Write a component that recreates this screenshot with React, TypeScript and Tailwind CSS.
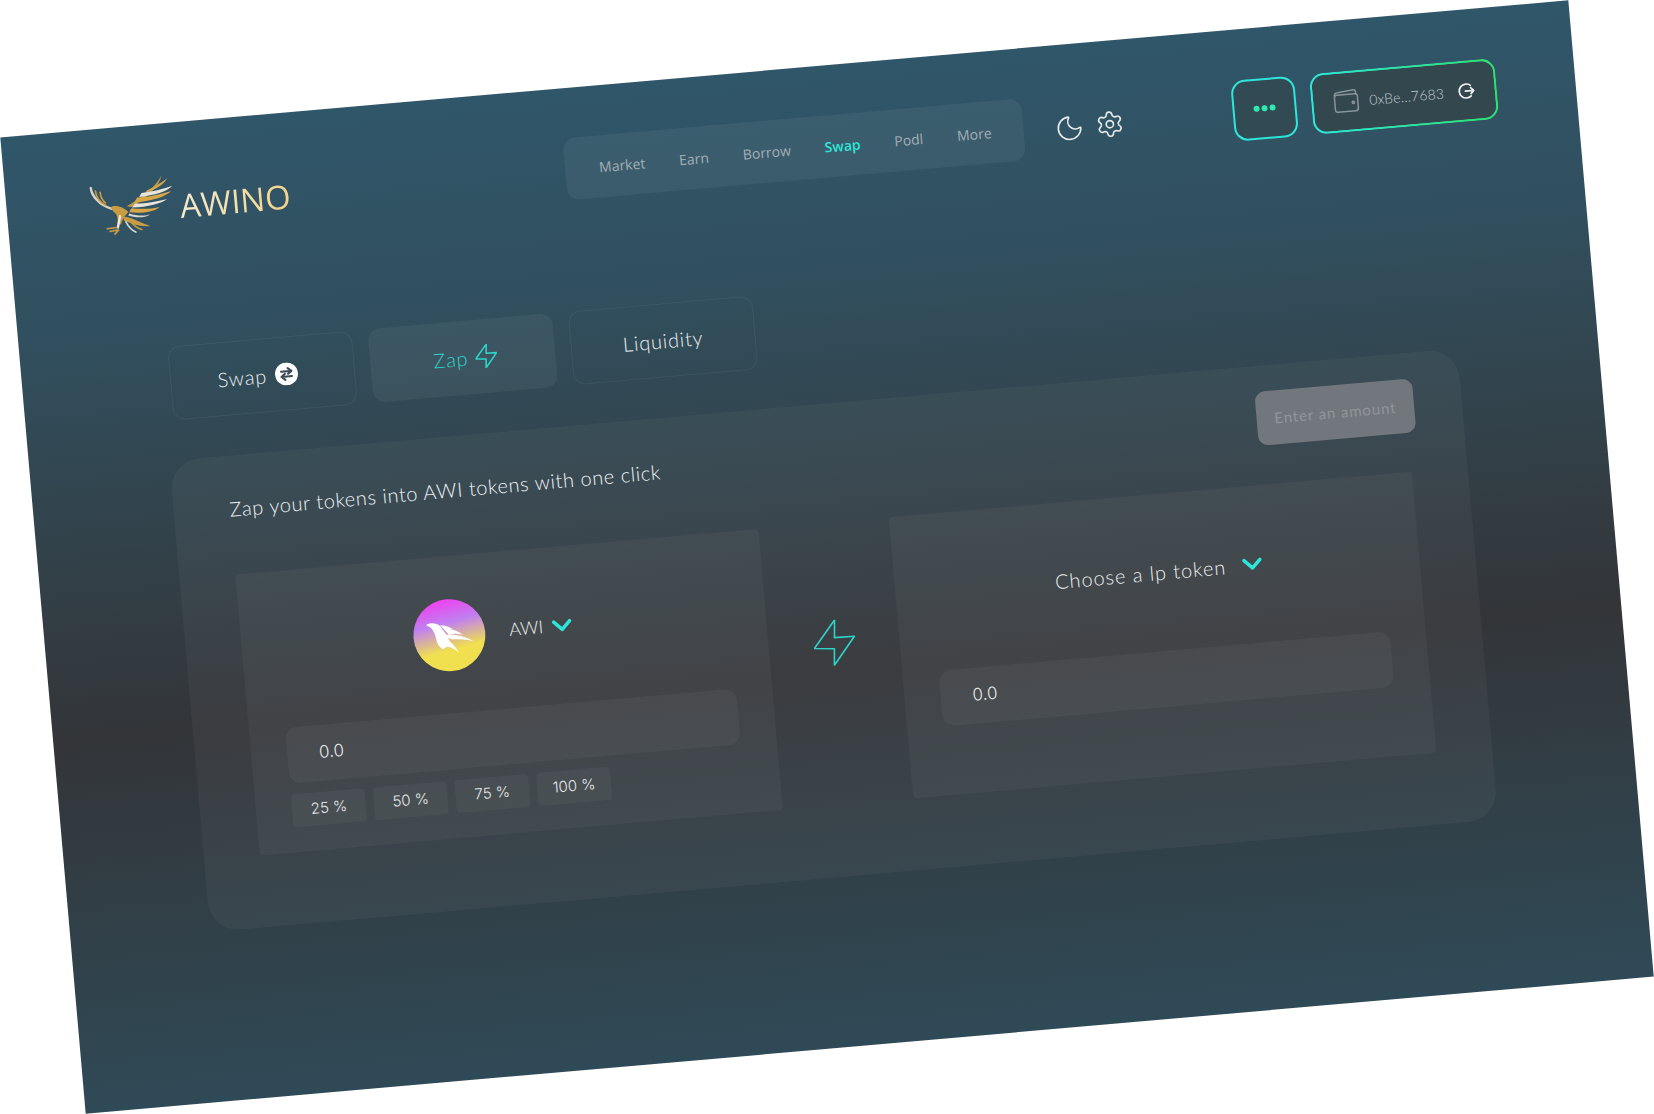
import { ChevronDown, Moon, Settings } from "lucide-react";

const navItems = ["Market", "Earn", "Borrow", "Swap", "Podl", "More"];
const percents = ["25 %", "50 %", "75 %", "100 %"];

function Eagle() {
  return (
    <svg width="90" height="68" viewBox="80 60 270 205" fill="none" strokeLinecap="round" className="-mt-[6px] shrink-0 overflow-visible">
      <g transform="rotate(5 210 160)">
        <path d="M200 168C240 145 285 115 305 75C300 105 265 140 215 170Z" fill="#c99b42" />
        <path d="M262 120C285 110 308 95 322 84C316 100 290 118 255 128Z" fill="#d3a64d" />
        <path d="M245 128C285 122 315 115 338 106C322 124 285 134 238 140Z" fill="#e7e4da" />
        <path d="M232 142C270 140 310 130 334 122C318 140 275 152 222 158Z" fill="#d9a646" />
        <path d="M226 160C260 160 300 152 322 146C305 160 265 170 216 172Z" fill="#e7e4da" />
        <path d="M214 174C245 178 280 175 300 170C285 185 245 190 208 186Z" fill="#d9a646" />
        <path d="M208 190C232 198 258 198 272 192C255 204 228 204 205 196Z" fill="#d8d4c8" />
        <path d="M92 113C95 135 115 165 156 176" stroke="#d8d4c8" strokeWidth="7" />
        <path d="M106 122C108 140 118 155 138 166" stroke="#c99b42" strokeWidth="5" />
        <path d="M120 126C122 140 126 150 136 158" stroke="#c99b42" strokeWidth="5" />
        <path d="M152 172C165 162 190 170 205 185C198 195 188 200 184 222L172 224C176 205 172 192 160 184Z" fill="#c99b42" />
        <path d="M180 198L174 232" stroke="#eeeae0" strokeWidth="7" />
        <path d="M190 200C215 200 245 220 272 228C240 232 210 218 192 212Z" fill="#c99b42" />
        <path d="M198 215C205 228 215 240 228 246" stroke="#d8d4c8" strokeWidth="5" />
        <path d="M210 212C220 225 235 235 246 238" stroke="#c99b42" strokeWidth="5" />
        <path d="M142 236L170 232M150 244L172 240M165 252L176 240" stroke="#c99b42" strokeWidth="5" />
      </g>
    </svg>
  );
}

function Phoenix() {
  return (
    <svg viewBox="100 88 216 216" className="h-full w-full overflow-visible">
      <g transform="rotate(5 208 195)" fill="#fff">
        <path d="M138 166C148 158 168 158 180 168C186 176 192 186 198 192C204 206 210 218 222 226C208 226 196 232 190 238C176 232 170 218 168 204C164 190 158 178 150 172Z" />
        <path d="M180 166C195 166 210 172 222 180C212 178 204 180 198 184Z" />
        <path d="M192 178C212 176 234 182 250 196C234 190 220 190 208 196Z" />
        <path d="M198 196C222 192 258 200 280 214C258 208 240 208 224 208C214 208 206 206 198 202Z" />
        <path d="M200 214C214 218 228 230 236 248C226 238 212 232 200 230Z" />
      </g>
    </svg>
  );
}

function SwapBadge() {
  return (
    <svg width="23" height="23" viewBox="0 0 22 22" fill="none" className="shrink-0">
      <circle cx="11" cy="11" r="11" fill="#fff" />
      <path d="M6 8.5H15.5M12.5 5.5L16 8.5L12.5 11M16 13.5H6.5M9.5 10.8L6 13.5L9.5 16.5" stroke="#3b4c56" strokeWidth="2" strokeLinecap="round" strokeLinejoin="round" />
    </svg>
  );
}

function Bolt({ className, stroke }: { className: string; stroke: number }) {
  return (
    <svg viewBox="0 0 42 46" fill="none" className={className}>
      <path d="M23 .5 21.4 18 41.4 18.4 19 45.5 20.4 29 .5 27Z" stroke="#2dd4c8" strokeWidth={stroke} strokeLinejoin="round" />
    </svg>
  );
}

function WalletIcon() {
  return (
    <svg width="26" height="24" viewBox="0 0 26 24" fill="none" stroke="#89949a" strokeWidth="1.5" className="shrink-0">
      <path d="M1.5 6.5C1.5 4.5 3 3 5 3L21 1.5C22.5 1.5 23 2.5 23 4V6" />
      <rect x="1.5" y="5.5" width="23" height="17" rx="2.5" />
      <circle cx="20" cy="14" r="1.2" />
    </svg>
  );
}

function SignOut() {
  return (
    <svg width="17" height="17" viewBox="0 0 17 17" fill="none" stroke="#eef0f1" strokeWidth="1.7" strokeLinecap="round" strokeLinejoin="round" className="shrink-0">
      <path d="M13 3.2A7 7 0 1 0 13 13.8" />
      <path d="M7.5 8.5H16M13 5.5L16 8.5L13 11.5" />
    </svg>
  );
}

function TokenRowChevron() {
  return <ChevronDown size={32} strokeWidth={2.6} className="text-[#2ee6d8]" />;
}

function Amount() {
  return (
    <div className="flex h-[56px] items-center rounded-xl bg-white/[.04] pl-[32px] font-['Inter',sans-serif] text-[17px] font-light text-[#e8eaeb]">
      0.0
    </div>
  );
}

export default function App() {
  return (
    <div className="flex h-[1114px] w-full items-center justify-center overflow-hidden bg-white">
      <div className="flex h-[980px] w-[1574px] shrink-0 rotate-[-5deg] flex-col bg-[linear-gradient(180deg,#30566a_0%,#31505f_20%,#333538_62%,#2f4a57_100%)] font-['Lato',sans-serif]">
        <header className="mt-[50px] flex h-[62px] items-center pl-[80px]">
          <div className="flex w-[480px] items-center gap-[3px]">
            <Eagle />
            <span className="mt-[6px] bg-[linear-gradient(90deg,#f6ebd0,#f2d388)] bg-clip-text font-['Open_Sans',sans-serif] text-[33px] text-transparent">
              AWINO
            </span>
          </div>
          <nav className="flex h-[62px] w-[460px] items-center gap-[34px] rounded-xl bg-white/[.05] pl-[34px] font-['Open_Sans',sans-serif] text-[14px] text-[#a3aeb4]">
            {navItems.map((item) => (
              <span key={item} className={item === "Swap" ? "font-semibold text-[#2ee6d8]" : ""}>
                {item}
              </span>
            ))}
          </nav>
          <Moon size={30} strokeWidth={1.35} className="ml-[31px] mt-[5px] text-[#e6e9ea]" />
          <Settings size={29} strokeWidth={1.35} className="ml-[11px] mt-[4px] text-[#e6e9ea]" />
          <button className="ml-[109px] flex h-[61px] w-[64px] items-center justify-center gap-[2px] rounded-[14px] border-[2.5px] border-[#2ee6d8] bg-[#324a54]">
            <span className="size-[6px] rounded-full bg-[#2fe8b0]" />
            <span className="size-[6px] rounded-full bg-[#2fe8b0]" />
            <span className="size-[6px] rounded-full bg-[#2fe8b0]" />
          </button>
          <div className="ml-[15px] flex h-[61px] w-[186px] items-center rounded-[14px] border-[2.5px] border-transparent pl-[20px] text-[14px] font-light text-[#c4cbcf] [background:linear-gradient(#33474f,#33474f)_padding-box,linear-gradient(90deg,#2ee6d8,#2fe070)_border-box]">
            <WalletIcon />
            <span className="ml-[10px] tracking-[.2px]">0xBe...7683</span>
            <span className="ml-[14px]">
              <SignOut />
            </span>
          </div>
        </header>

        <div className="ml-[148px] mt-[111px] flex gap-[16px] text-[20px] font-light tracking-[.8px] text-[#eceeef]">
          <div className="flex h-[74px] w-[185px] items-center justify-center gap-[8px] rounded-xl border border-white/[.06] pr-[10px]">
            Swap <SwapBadge />
          </div>
          <div className="flex h-[74px] w-[185px] items-center justify-center gap-[7px] rounded-xl bg-white/[.05] pl-[5px] text-[#2dd4c8]">
            Zap <Bolt className="h-[24px] w-[22px]" stroke={3} />
          </div>
          <div className="flex h-[74px] w-[185px] items-center justify-center rounded-xl border border-white/[.06]">
            Liquidity
          </div>
        </div>

        <main className="ml-[140px] mt-[40px] h-[473px] w-[1293px] rounded-[30px] bg-white/[.04] px-[56px] pt-[26px]">
          <div className="-mr-[8px] flex h-[54px] items-center justify-between">
            <h1 className="text-[20px] font-light tracking-[.6px] text-[#f0f2f3]">
              Zap your tokens into AWI tokens with one click
            </h1>
            <button className="flex h-[54px] w-[158px] items-center justify-center rounded-[10px] bg-[#72777d] text-[15px] tracking-[.9px] text-[#90959a]">
              Enter an amount
            </button>
          </div>

          <div className="mt-[39px] flex">
            <section className="h-[282px] w-[525px] rounded bg-white/[.035] px-[36px] pt-[43px]">
              <div className="flex h-[72px] items-center pl-[136px]">
                <div className="size-[72px] rounded-full bg-[linear-gradient(170deg,#f03ff0_5%,#c080f0_35%,#f0e050_68%)]">
                  <Phoenix />
                </div>
                <span className="ml-[24px] -mt-[2px] text-[18px] font-light text-[#eceeef]">AWI</span>
                <span className="ml-[3px]">
                  <TokenRowChevron />
                </span>
              </div>
              <div className="mt-[42px]">
                <Amount />
              </div>
              <div className="mt-[11px] flex gap-[8px] font-['Inter',sans-serif] text-[15px] font-light text-[#e4e6e7]">
                {percents.map((p) => (
                  <button key={p} className="flex h-[33px] w-[74px] items-center justify-center rounded bg-white/[.04]">
                    {p}
                  </button>
                ))}
              </div>
            </section>

            <div className="flex w-[131px] shrink-0 justify-center pt-[97px]">
              <Bolt className="h-[46px] w-[42px]" stroke={1.6} />
            </div>

            <section className="h-[282px] w-[525px] rounded bg-white/[.035] px-[36px] pt-[43px]">
              <div className="flex h-[72px] items-center pl-[124px]">
                <span className="-mt-[3px] text-[20px] font-light tracking-[.95px] text-[#eceeef]">Choose a lp token</span>
                <span className="ml-[10px] -mt-[3px]">
                  <TokenRowChevron />
                </span>
              </div>
              <div className="mt-[42px]">
                <Amount />
              </div>
            </section>
          </div>
        </main>
      </div>
    </div>
  );
}
